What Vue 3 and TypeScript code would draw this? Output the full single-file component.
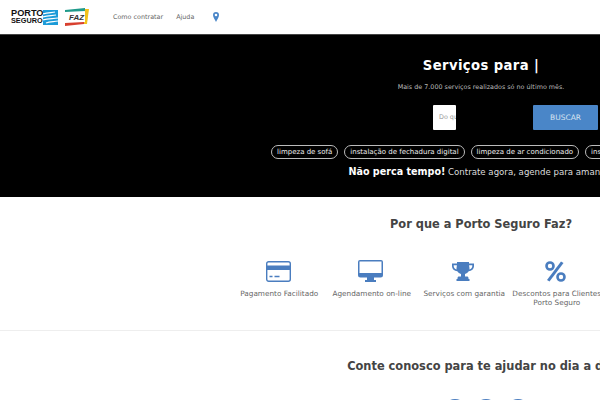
<template>
  <div class="page">
    <header class="topbar">
      <div class="logo">
        <div class="logo-name"><span class="porto">PORTO</span><span class="seguro">SEGURO</span></div>
        <svg class="logo-mark" width="15" height="15" viewBox="0 0 15 15">
          <rect width="15" height="15" fill="#1c9bd8" />
          <path d="M0 4C5 2 9 3 12 2M0 7C5 5 9 6 13 5M0 10C5 8 10 9 15 8M3 13C7 11 11 12 15 11" fill="none" stroke="#fff" stroke-width="1.2" />
        </svg>
        <svg class="logo-faz" width="25" height="18" viewBox="0 0 25 18">
          <path d="M1 2L21 0V3L1 4Z" fill="#1f9a8a" />
          <path d="M21 1H25L23 16H20Z" fill="#f2c21b" />
          <path d="M1 4H21V14H1Z" fill="#fff" />
          <path d="M1 15L20 14V16L1 18Z" fill="#d8402f" />
          <text x="5" y="12" class="faz-text">FAZ</text>
        </svg>
      </div>
      <nav class="nav">
        <a>Como contratar</a>
        <a>Ajuda</a>
        <svg width="6" height="10" viewBox="0 0 6 10">
          <path fill-rule="evenodd" d="M3 0a3 3 0 0 1 3 3C6 5.2 4 8 3 10 2 8 0 5.2 0 3a3 3 0 0 1 3-3Zm0 1.700a1.300 1.300 0 1 0 0 2.600 1.300 1.300 0 0 0 0-2.600Z" fill="#4a86c8" />
        </svg>
      </nav>
    </header>

    <section class="hero">
      <h1>Serviços para |</h1>
      <p class="hero-sub">Mais de 7.000 serviços realizados só no último mês.</p>
      <div class="search">
        <div class="search-input">Do que você precisa?</div>
        <button class="search-btn">BUSCAR</button>
      </div>
      <div class="tags">
        <span v-for="tag in tags" :key="tag" class="tag">{{ tag }}</span>
      </div>
      <p class="hero-cta"><strong>Não perca tempo!</strong> Contrate agora, agende para amanhã.</p>
    </section>

    <section class="why">
      <h2>Por que a Porto Seguro Faz?</h2>
      <div class="benefits">
        <div class="benefit">
          <div class="benefit-icon">
            <svg width="25" height="21" viewBox="0 0 25 21">
              <rect x=".7" y=".7" width="23.6" height="19.6" rx="2" fill="none" stroke="#4a7dbf" stroke-width="1.4" />
              <rect x="1" y="4.5" width="23" height="4.5" fill="#4a7dbf" />
              <path d="M3.5 15.5h3M8.5 15.5h5" stroke="#4a7dbf" stroke-width="1.5" />
            </svg>
          </div>
          <span>Pagamento Facilitado</span>
        </div>
        <div class="benefit">
          <div class="benefit-icon">
            <svg width="25" height="22" viewBox="0 0 25 22">
              <path fill-rule="evenodd" d="M2 0h21a2 2 0 0 1 2 2v13a2.5 2.5 0 0 1-2.500 2.500H16V20h2v2H7v-2h2v-2.500H2.500A2.500 2.500 0 0 1 0 15V2a2 2 0 0 1 2-2Zm-.5 1.500V13h22V1.500Z" fill="#4a7dbf" />
            </svg>
          </div>
          <span>Agendamento on-line</span>
        </div>
        <div class="benefit">
          <div class="benefit-icon">
            <svg width="22" height="19" viewBox="0 0 22 19">
              <path fill-rule="evenodd" d="M5 0h12v1.500h5V4c0 3-2.500 5-5.300 5.300-1 1.400-2.200 2.300-3.700 2.700v2.500h2c.8 0 1.500.6 1.500 1.500v1h1v2H4.500v-2h1v-1c0-.9.7-1.500 1.500-1.500h2V12c-1.500-.4-2.700-1.300-3.700-2.700C2.500 9 0 7 0 4V1.500h5ZM1.700 3.200V4c0 1.700 1.300 3 2.900 3.600C4.200 6.200 4.900 4.700 4.900 3.200Zm18.600 0h-3.200c0 1.500.7 3 .3 4.400 1.600-.6 2.900-1.900 2.900-3.600Z" fill="#4a7dbf" />
            </svg>
          </div>
          <span>Serviços com garantia</span>
        </div>
        <div class="benefit">
          <div class="benefit-icon">
            <svg width="21" height="21" viewBox="0 0 21 21">
              <path d="M16 .5 18.500 2 4.500 20.500 2 19Z" fill="#4a7dbf" />
              <circle cx="5" cy="5" r="3.500" fill="none" stroke="#4a7dbf" stroke-width="2.600" />
              <circle cx="16" cy="16" r="3.500" fill="none" stroke="#4a7dbf" stroke-width="2.600" />
            </svg>
          </div>
          <span>Descontos para Clientes<br />Porto Seguro</span>
        </div>
      </div>
    </section>

    <section class="help">
      <h2>Conte conosco para te ajudar no dia a dia</h2>
      <div class="circles">
        <i v-for="n in 3" :key="n"></i>
      </div>
    </section>
  </div>
</template>

<script setup lang="ts">
const tags: string[] = [
  'limpeza de sofá',
  'instalação de fechadura digital',
  'limpeza de ar condicionado',
  'instalação de chuveiro',
]
</script>

<style>
html,
body {
  overflow: hidden;
  background: #fff;
}
</style>

<style scoped>
.page {
  width: 962px;
  height: 400px;
  overflow: hidden;
  font-family: "DejaVu Sans", sans-serif;
  color: #444;
}

.topbar {
  display: flex;
  align-items: center;
  height: 34px;
  padding-left: 11px;
  border-bottom: 1px solid #444;
}

.logo {
  display: flex;
  align-items: center;
  width: 102px;
}

.logo-name {
  display: flex;
  flex-direction: column;
  width: 32px;
  font-family: "Liberation Sans", sans-serif;
  font-weight: 700;
  color: #111;
}

.porto {
  font-size: 9.2px;
  line-height: 7.5px;
}

.seguro {
  font-size: 7.3px;
  line-height: 7px;
}

.logo-faz {
  margin-left: 6px;
}

.faz-text {
  font-family: "Liberation Sans", sans-serif;
  font-size: 8px;
  font-weight: 700;
  font-style: italic;
  fill: #333;
}

.nav {
  display: flex;
  align-items: center;
  gap: 13px;
  font-size: 6.4px;
  color: #666;
}

.nav svg {
  margin-left: 6px;
}

.hero {
  display: flex;
  flex-direction: column;
  align-items: center;
  height: 162px;
  background: #000;
  color: #fff;
}

.hero h1 {
  margin: 21px 0 0;
  font-size: 13.2px;
  line-height: 19px;
  font-weight: 700;
  letter-spacing: 0.4px;
}

.hero-sub {
  margin: 7px 0 0;
  font-size: 6.4px;
  line-height: 11px;
  color: #bbb;
}

.search {
  display: flex;
  align-self: flex-start;
  margin: 12px 0 0 433px;
}

.search-input {
  width: 23px;
  height: 25px;
  overflow: hidden;
  padding-left: 6px;
  box-sizing: border-box;
  background: #fff;
  color: #999;
  font-size: 6.4px;
  line-height: 25px;
  white-space: nowrap;
  border-radius: 1px;
}

.search-btn {
  width: 65px;
  height: 25px;
  margin-left: 77px;
  border: 0;
  border-radius: 1px;
  background: #4a86c8;
  color: #d8e3f0;
  font-family: inherit;
  font-size: 7.5px;
}

.tags {
  display: flex;
  gap: 6px;
  align-self: flex-start;
  margin: 15px 0 0 271px;
}

.tag {
  padding: 0 5px;
  border: 1px solid #bbb;
  border-radius: 8px;
  font-size: 7px;
  line-height: 12px;
  white-space: nowrap;
  color: #eee;
}

.hero-cta {
  margin: 6px 0 0;
  font-size: 8.6px;
  line-height: 13px;
  color: #ddd;
  white-space: nowrap;
}

.hero-cta strong {
  color: #fff;
  font-size: 9.6px;
}

.why {
  height: 133px;
  border-bottom: 1px solid #eee;
  text-align: center;
}

.why h2,
.help h2 {
  margin: 0;
  font-size: 11.4px;
  font-weight: 700;
  line-height: 18px;
  color: #444;
}

.why h2 {
  padding-top: 18px;
}

.benefits {
  display: grid;
  grid-template-columns: repeat(4, 92.5px);
  margin: 27px 0 0 233px;
}

.benefit {
  font-size: 7.3px;
  line-height: 9px;
  color: #666;
}

.benefit-icon {
  display: flex;
  align-items: center;
  justify-content: center;
  height: 22px;
  margin-bottom: 7px;
  padding-right: 2px;
}

.help {
  text-align: center;
}

.help h2 {
  padding-top: 26px;
}

.circles {
  display: flex;
  justify-content: center;
  gap: 7.5px;
  margin: 24px 0 0 10px;
}

.circles i {
  display: block;
  width: 24px;
  height: 24px;
  border-radius: 50%;
  background: #4a7dbf;
}
</style>
